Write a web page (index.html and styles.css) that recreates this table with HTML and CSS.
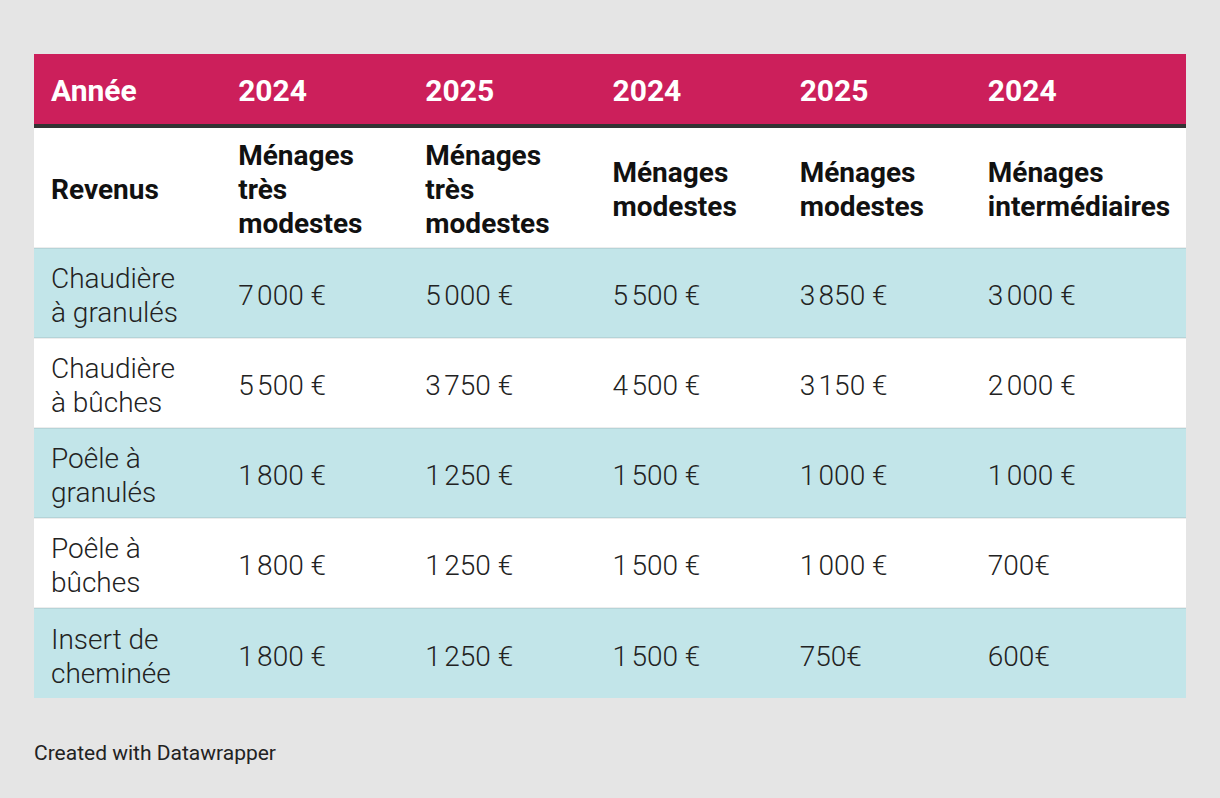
FILE: index.html
```html
<!DOCTYPE html>
<html lang="fr">
<head>
<meta charset="utf-8">
<link rel="stylesheet" href="styles.css">
<title>Aides</title>
</head>
<body>
<div class="page">
  <table class="dw">
    <colgroup>
      <col class="c1"><col class="c2"><col class="c2"><col class="c2"><col class="c3"><col class="c4">
    </colgroup>
    <thead>
      <tr class="years">
        <th>Année</th><th>2024</th><th>2025</th><th>2024</th><th>2025</th><th>2024</th>
      </tr>
      <tr class="revenus">
        <th>Revenus</th>
        <th>Ménages très modestes</th>
        <th>Ménages très modestes</th>
        <th>Ménages modestes</th>
        <th>Ménages modestes</th>
        <th>Ménages intermédiaires</th>
      </tr>
    </thead>
    <tbody>
      <tr class="odd">
        <td>Chaudière à&nbsp;granulés</td><td>7&#8239;000 €</td><td>5&#8239;000 €</td><td>5&#8239;500 €</td><td>3&#8239;850 €</td><td>3&#8239;000 €</td>
      </tr>
      <tr class="even">
        <td>Chaudière à&nbsp;bûches</td><td>5&#8239;500 €</td><td>3&#8239;750 €</td><td>4&#8239;500 €</td><td>3&#8239;150 €</td><td>2&#8239;000 €</td>
      </tr>
      <tr class="odd">
        <td>Poêle à granulés</td><td>1&#8239;800 €</td><td>1&#8239;250 €</td><td>1&#8239;500 €</td><td>1&#8239;000 €</td><td>1&#8239;000 €</td>
      </tr>
      <tr class="even">
        <td>Poêle à bûches</td><td>1&#8239;800 €</td><td>1&#8239;250 €</td><td>1&#8239;500 €</td><td>1&#8239;000 €</td><td>700€</td>
      </tr>
      <tr class="odd">
        <td>Insert de cheminée</td><td>1&#8239;800 €</td><td>1&#8239;250 €</td><td>1&#8239;500 €</td><td>750€</td><td>600€</td>
      </tr>
    </tbody>
  </table>
  <p class="credit">Created with Datawrapper</p>
</div>
</body>
</html>
```
FILE: styles.css
```css
html, body {
  margin: 0;
  padding: 0;
  background: #e5e5e5;
}

.page {
  padding: 54px 34px 0 34px;
  font-family: Roboto, "Liberation Sans", sans-serif;
}

.dw {
  width: 1152px;
  border-collapse: collapse;
  table-layout: fixed;
  font-size: 28px;
  line-height: 34px;
}

.c1, .c2 { width: 187px; }
.c3 { width: 188px; }
.c4 { width: 215px; }

.dw th, .dw td {
  box-sizing: border-box;
  text-align: left;
  vertical-align: middle;
  padding: 0 17px;
}

.years th {
  background: #cc1f5b;
  color: #ffffff;
  font-weight: 700;
  font-size: 30px;
  height: 72px;
  padding-top: 4px;
  padding-bottom: 0;
  border-bottom: 4px solid #333333;
}

.revenus th {
  background: #ffffff;
  color: #111111;
  font-weight: 700;
  height: 122px;
  padding-top: 4px;
  padding-bottom: 0;
}

.dw td {
  color: #222222;
  font-weight: 300;
  height: 90px;
  padding-top: 6px;
  padding-bottom: 0;
  border-top: 2px solid rgba(0, 0, 0, 0.07);
}

.odd td { background: #c2e5e9; }
.even td { background: #ffffff; }

.credit {
  margin: 43px 0 0 0;
  font-size: 21px;
  line-height: 24px;
  color: #222222;
}
```
